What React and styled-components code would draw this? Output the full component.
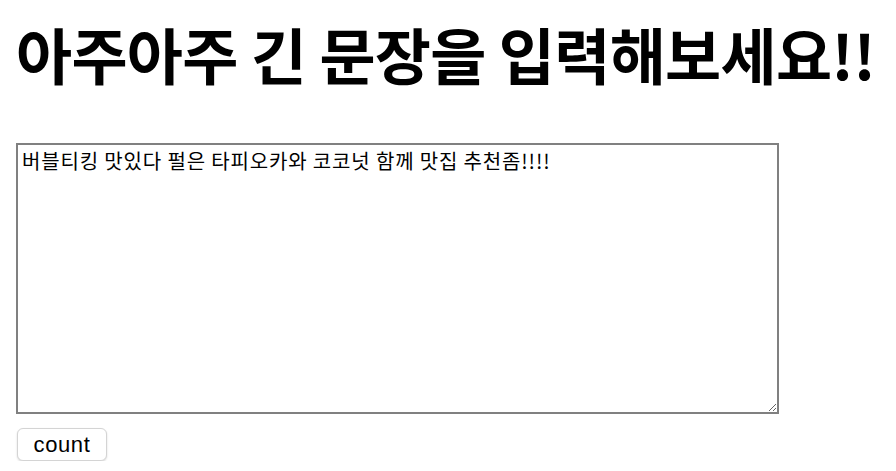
import React, { useState } from "react";
import styled, { createGlobalStyle } from "styled-components";

const Global = createGlobalStyle`
  html, body { margin: 0; padding: 0; background: #fff; }
  body { font-family: "Noto Sans CJK KR", "Noto Sans", sans-serif; color: #000; }
`;

const Page = styled.div`
  padding: 0 16px;
  display: flex;
  flex-direction: column;
  align-items: flex-start;
`;

const Title = styled.h1`
  margin: 6px 0 0;
  font-size: 61px;
  font-weight: 700;
  line-height: 96px;
  letter-spacing: -0.7px;
  white-space: nowrap;
`;

const Area = styled.textarea`
  margin-top: 41px;
  width: 763px;
  height: 271px;
  box-sizing: border-box;
  border: 2px solid #808080;
  padding: 3px 4px;
  font-family: "Noto Sans CJK KR", sans-serif;
  font-size: 20px;
  letter-spacing: 0.85px;
  line-height: 1.3;
  color: #000;
  resize: both;
  outline: none;
`;

const Button = styled.button`
  margin: 14px 0 0 1px;
  width: 90px;
  height: 33px;
  box-sizing: border-box;
  border: 1px solid #d4d4d4;
  border-radius: 6px;
  background: #fff;
  box-shadow: 0 1px 2px rgba(0,0,0,0.15);
  font-family: "Liberation Sans", "Noto Sans", sans-serif;
  font-size: 22px;
  letter-spacing: 0.6px;
  color: #000;
  padding: 0;
`;

export default function App() {
  const [text, setText] = useState("버블티킹 맛있다 펄은 타피오카와 코코넛 함께 맛집 추천좀!!!!");
  return (
    <>
      <Global />
      <Page>
        <Title>아주아주 긴 문장을 입력해보세요!!</Title>
        <Area value={text} onChange={(e) => setText(e.target.value)} />
        <Button>count</Button>
      </Page>
    </>
  );
}
